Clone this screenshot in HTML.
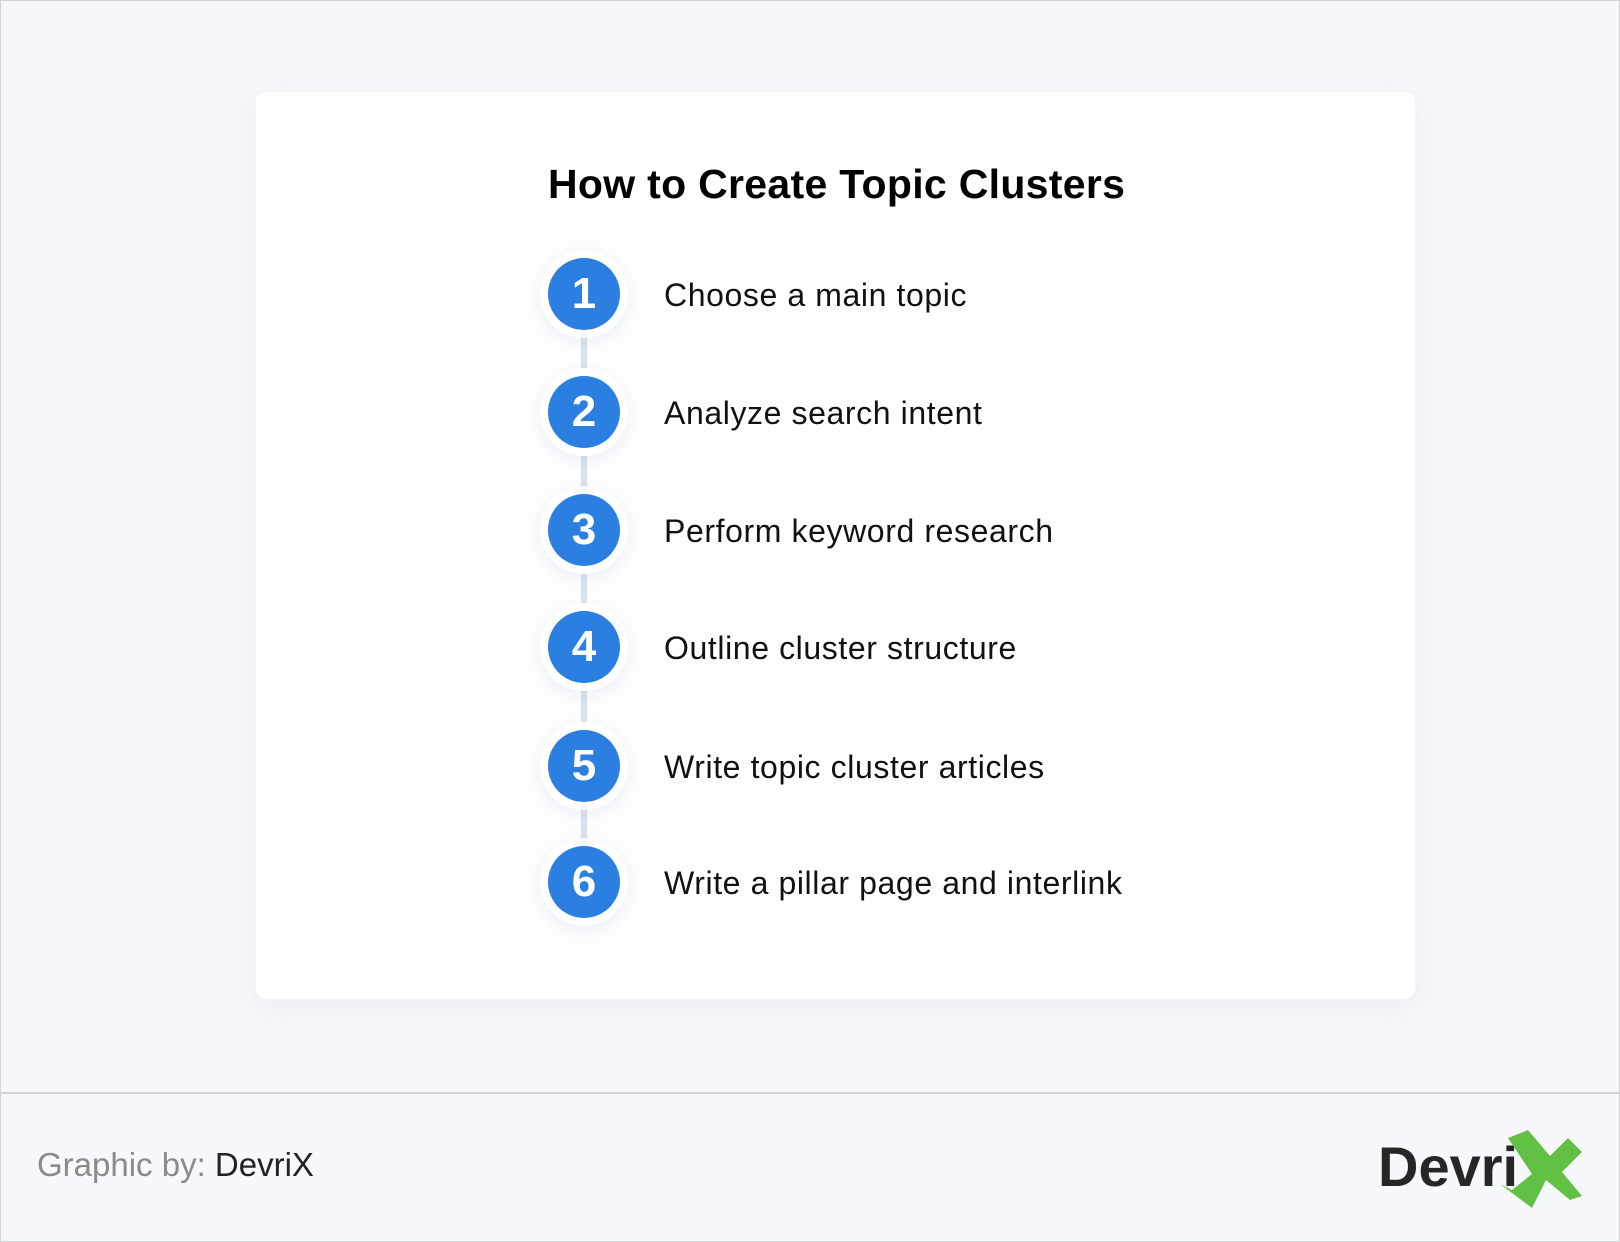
<!DOCTYPE html>
<html><head><style>
body{margin:0;width:1620px;height:1242px;background:#f7f8fb;position:relative;overflow:hidden;font-family:"Liberation Sans",sans-serif}
.frame{position:absolute;left:0;top:0;width:1618px;height:1240px;border:1px solid #cfd2d6}
.card{position:absolute;left:256px;top:92px;width:1159px;height:907px;background:#fff;border-radius:10px;box-shadow:0 8px 30px rgba(40,70,120,.07)}
h1{position:absolute;left:548px;top:161px;margin:0;font-size:41px;font-weight:bold;color:#000;letter-spacing:0.3px}
.c{position:absolute;width:72px;height:72px;border-radius:50%;background:#2b7fe0;color:#fff;font-weight:bold;font-size:44px;text-align:center;line-height:72px;box-shadow:0 0 0 8px #fff,0 4px 22px 8px rgba(40,80,140,.10)}
.l{position:absolute;left:581px;width:6px;background:#dce4ef}
.t{position:absolute;left:664px;font-size:32px;color:#111;line-height:40px;letter-spacing:0.6px}
.hr{position:absolute;left:0;top:1092px;width:1620px;height:2px;background:#cfd2d6}
.g{position:absolute;left:37px;top:1146px;font-size:33px;color:#8a8a8a}
.g b{color:#222;font-weight:normal}
.logo{position:absolute;left:1378px;top:1134px;font-size:56px;font-weight:bold;color:#262626}
</style></head><body>
<div class="frame"></div>
<div class="card"></div>
<h1>How to Create Topic Clusters</h1>
<div class="l" style="top:330px;height:46px"></div>
<div class="l" style="top:448px;height:46px"></div>
<div class="l" style="top:566px;height:46px"></div>
<div class="l" style="top:683px;height:46px"></div>
<div class="l" style="top:802px;height:46px"></div>
<div class="c" style="left:548px;top:258px">1</div>
<div class="c" style="left:548px;top:376px">2</div>
<div class="c" style="left:548px;top:494px">3</div>
<div class="c" style="left:548px;top:611px">4</div>
<div class="c" style="left:548px;top:730px">5</div>
<div class="c" style="left:548px;top:846px">6</div>
<div class="t" style="top:275px">Choose a main topic</div>
<div class="t" style="top:393px">Analyze search intent</div>
<div class="t" style="top:511px">Perform keyword research</div>
<div class="t" style="top:628px">Outline cluster structure</div>
<div class="t" style="top:747px">Write topic cluster articles</div>
<div class="t" style="top:863px">Write a pillar page and interlink</div>
<div class="hr"></div>
<div class="g">Graphic by: <b>DevriX</b></div>
<div class="logo">Devri</div>
<svg style="position:absolute;left:1500px;top:1124px" width="86" height="84" viewBox="0 0 86 84">
<polygon fill="#62c044" points="8,14 28,6 50,32 68,14 82,28 62,48 82,72 70,76 46,56 32,84 0,60 12,66 32,50 " />
</svg>
</body></html>
